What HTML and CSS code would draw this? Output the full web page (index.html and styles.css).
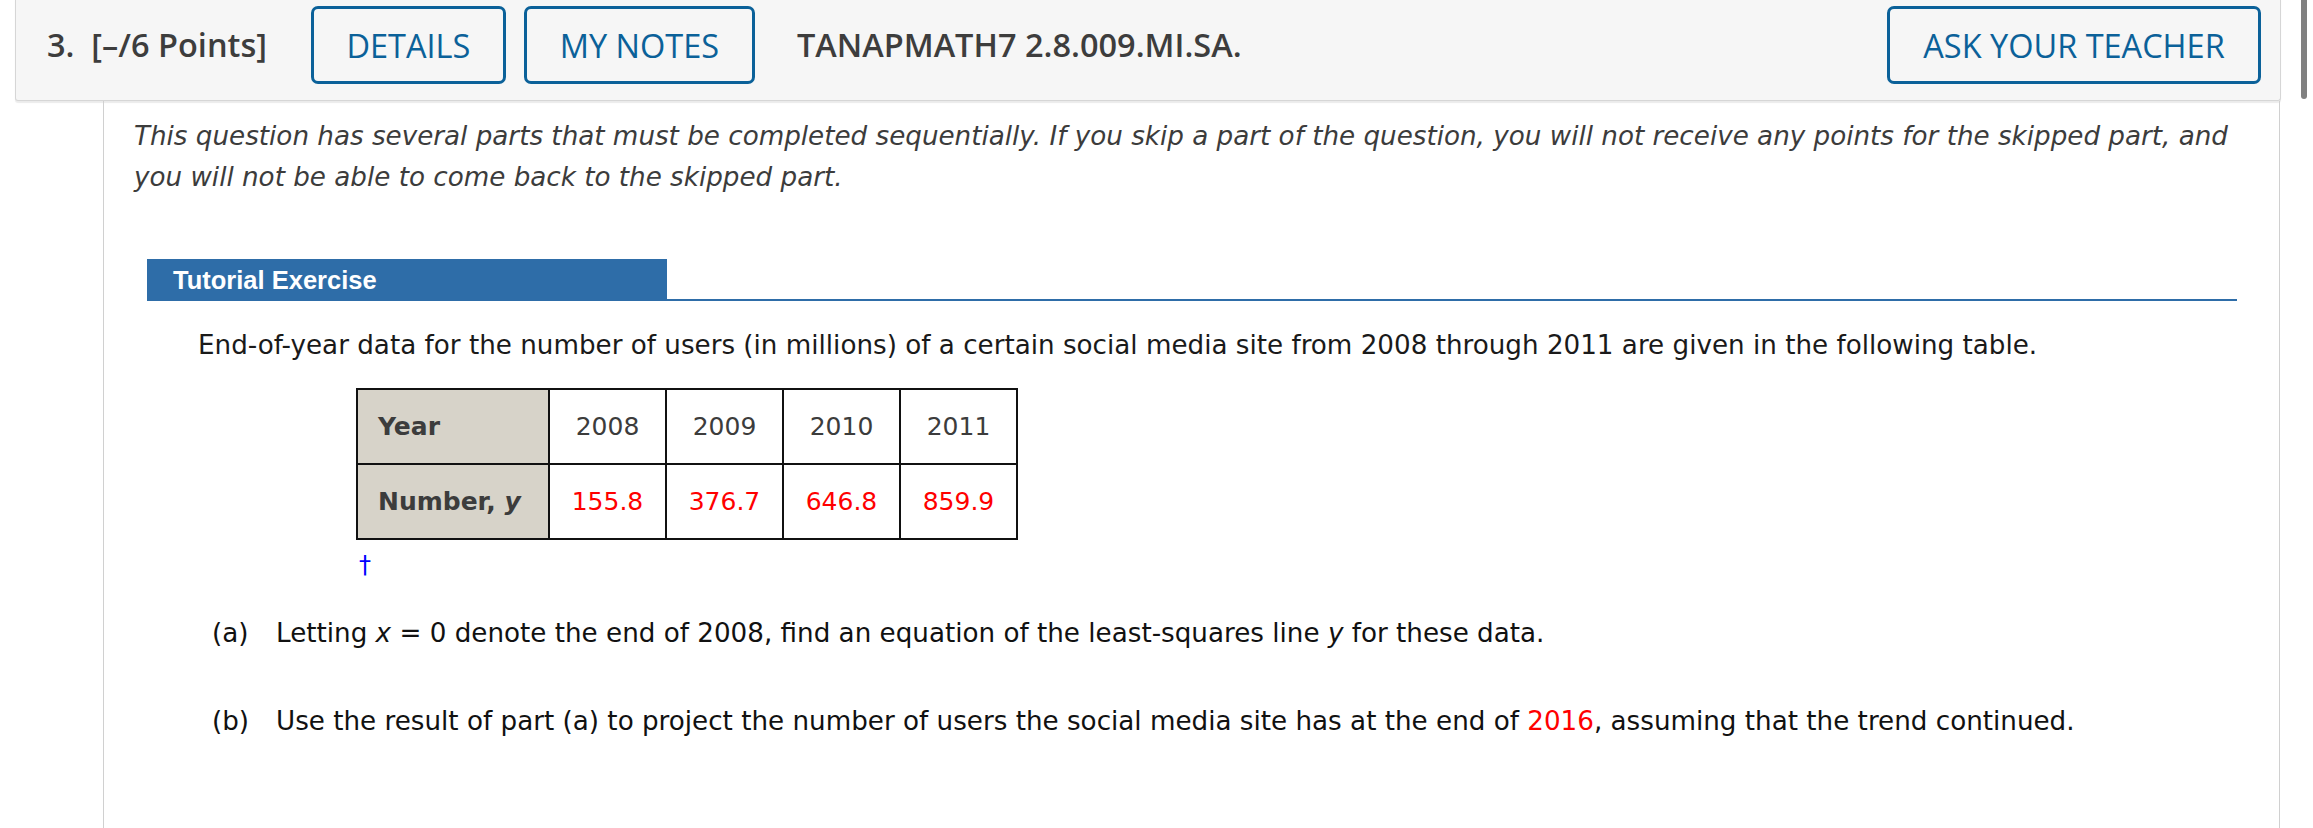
FILE: index.html
```html
<!DOCTYPE html>
<html lang="en">
<head>
<meta charset="utf-8">
<title>Question 3</title>
<link rel="stylesheet" href="styles.css">
</head>
<body>
<div class="scroll-thumb"></div>
<header class="qhead">
  <span class="qnum">3.&nbsp; [–/6 Points]</span>
  <button class="qbtn btn-details">DETAILS</button>
  <button class="qbtn btn-notes">MY NOTES</button>
  <span class="qcode">TANAPMATH7 2.8.009.MI.SA.</span>
  <span class="spacer"></span>
  <button class="qbtn btn-ask">ASK YOUR TEACHER</button>
</header>
<main class="qbody">
  <p class="intro">This question has several parts that must be completed sequentially. If you skip a part of the question, you will not receive any points for the skipped part, and you will not be able to come back to the skipped part.</p>
  <section class="tutorial">
    <div class="tut-head"><span class="tut-title">Tutorial Exercise</span></div>
    <p class="prompt">End-of-year data for the number of users (in millions) of a certain social media site from 2008 through 2011 are given in the following table.</p>
    <table class="data">
      <tr><th>Year</th><td>2008</td><td>2009</td><td>2010</td><td>2011</td></tr>
      <tr><th>Number, <i>y</i></th><td class="red">155.8</td><td class="red">376.7</td><td class="red">646.8</td><td class="red">859.9</td></tr>
    </table>
    <div class="dagger">†</div>
    <div class="part part-a"><span class="plabel">(a)</span><span>Letting <i>x</i> = 0 denote the end of 2008, find an equation of the least-squares line <i>y</i> for these data.</span></div>
    <div class="part part-b"><span class="plabel">(b)</span><span>Use the result of part (a) to project the number of users the social media site has at the end of <span class="red">2016</span>, assuming that the trend continued.</span></div>
  </section>
</main>
</body>
</html>
```
FILE: styles.css
```css
html, body { margin: 0; padding: 0; background: #fff; }
body { width: 2313px; height: 828px; overflow: hidden; position: relative; }

.scroll-thumb {
  position: absolute; left: 2301px; top: -4px; width: 6px; height: 103px;
  background: #808080; border-radius: 3px;
}

.qhead {
  display: flex; align-items: flex-start;
  margin: -2px 32px 0 15px;
  height: 103px; box-sizing: border-box;
  padding: 8px 19px 0 31px;
  background: #f6f6f6;
  border: 1px solid #d6d6d6; border-top: none;
  border-radius: 0 0 3px 3px;
  box-shadow: 0 2px 1px rgba(0,0,0,0.08);
  font-family: "Open Sans", sans-serif;
}
.qnum, .qcode {
  font-weight: 600; font-size: 32.5px; color: #3d3d3d;
  line-height: 78px;
}
.qnum { margin-right: 44px; }
.qbtn {
  font-family: "Open Sans", sans-serif; font-size: 32.5px; color: #0b6199;
  background: #f6f6f6; border: 3px solid #0b6199; border-radius: 7px;
  height: 78px; padding: 0; text-align: center;
}
.btn-details { width: 195px; margin-right: 18px; }
.btn-notes { width: 231px; margin-right: 42px; }
.spacer { flex: 1; }
.btn-ask { width: 374px; }

.qbody {
  margin: 0 33px 0 103px;
  border-left: 1px solid #d0d0d0; border-right: 1px solid #d0d0d0;
  padding: 15px 0 0 0;
  height: 740px;
  font-family: "DejaVu Sans", Verdana, sans-serif;
}
.intro {
  margin: 0 40px 0 30px;
  font-style: italic; font-size: 26.2px; line-height: 41px; color: #3c3c3c;
}
.tutorial { margin: 61px 42px 0 43px; }
.tut-head { border-bottom: 2px solid #2e6da8; height: 40px; }
.tut-title {
  display: inline-block; width: 520px; height: 42px; box-sizing: border-box;
  background: #2e6da8; color: #fff;
  font-family: "Liberation Sans", Arial, sans-serif; font-weight: bold; font-size: 25.5px;
  line-height: 42px; padding-left: 26px;
}
.prompt { margin: 26px 0 0 51px; font-size: 26.2px; line-height: 36px; color: #1a1a1a; }
.data {
  margin: 25px 0 0 209px; border-collapse: collapse;
  font-size: 25px; color: #3c3c3c;
}
.data th, .data td { border: 2px solid #111; height: 73px; padding: 0; }
.data th {
  width: 170px; background: #d7d3c9; text-align: left; padding-left: 20px; font-weight: bold;
}
.data td { width: 115px; text-align: center; }
.red { color: #f00 !important; }
.dagger { margin: 10px 0 0 212px; color: #00f; font-size: 24px; line-height: 30px; }
.part { display: flex; margin-left: 65px; font-size: 26.2px; line-height: 36px; color: #111; }
.part-a { margin-top: 35px; }
.part-b { margin-top: 52px; }
.plabel { width: 64px; flex: none; }
```
